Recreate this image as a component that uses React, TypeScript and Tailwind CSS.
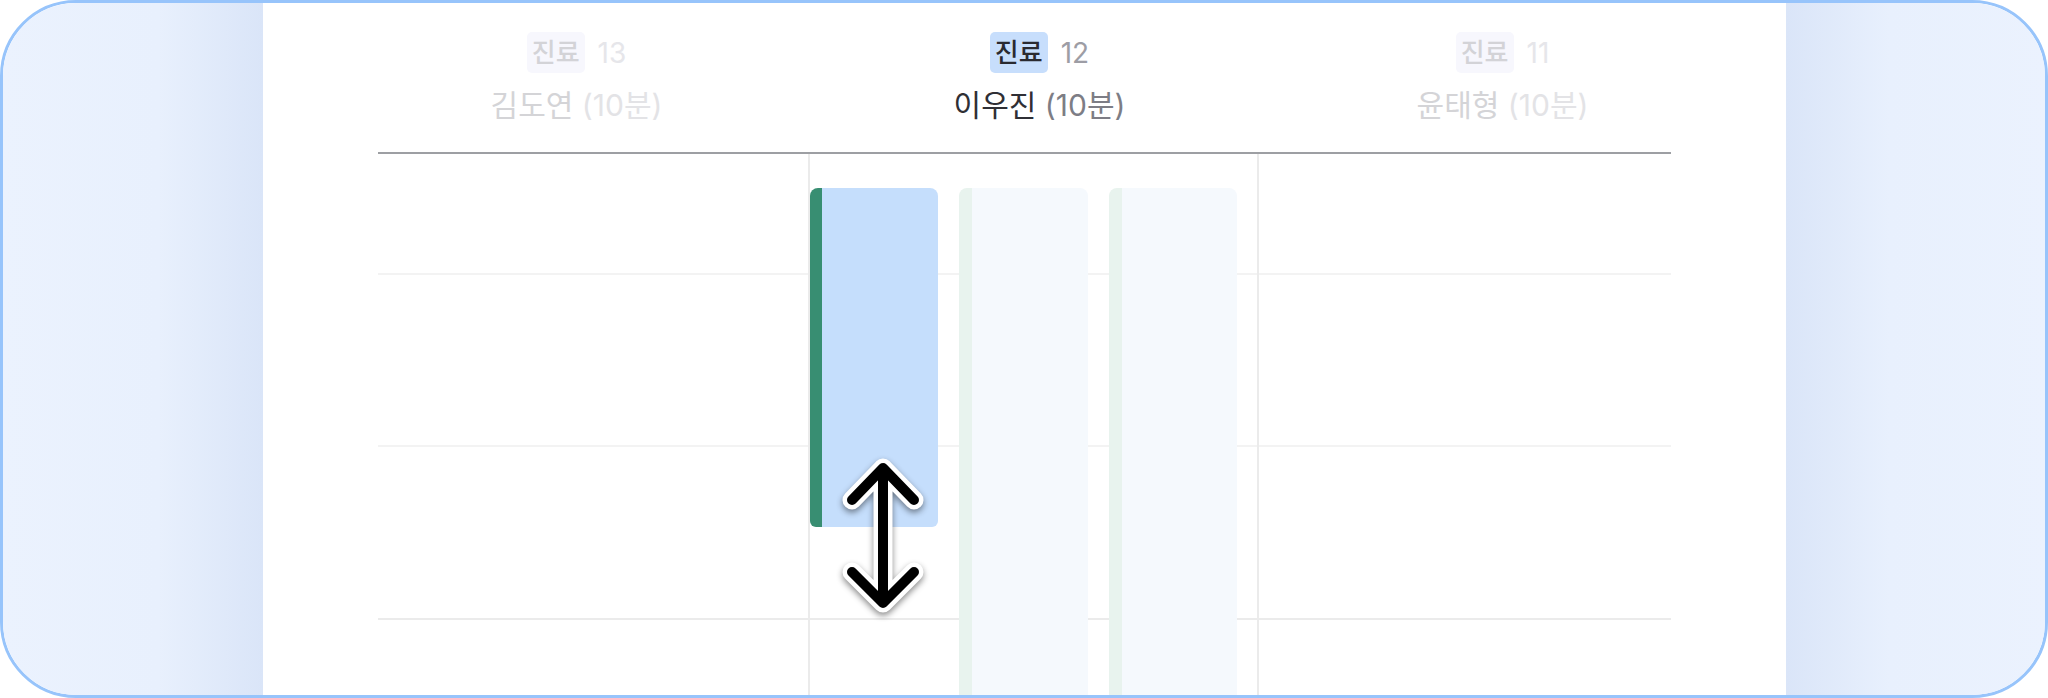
import React from "react"

const doctors = [
    { name: "김도연", count: 13, active: false },
    { name: "이우진", count: 12, active: true },
    { name: "윤태형", count: 11, active: false },
]

function ResizeCursor() {
    const d = "M50 18V153M19 50L50 18L81 50M19 122L50 153L81 122"
    return (
        <svg
            width="100"
            height="170"
            viewBox="0 0 100 170"
            className="drop-shadow-[0_3px_3px_rgba(0,0,0,0.45)]"
        >
            <g fill="none" strokeLinecap="round" strokeLinejoin="round">
                <path d={d} stroke="#ffffff" strokeWidth="19" />
                <path d={d} stroke="#000000" strokeWidth="10" />
            </g>
        </svg>
    )
}

export default function App() {
    return (
        <div className="w-[2048px] h-[698px] rounded-[76px] border-[3px] border-[#97c4fb] overflow-hidden flex font-['Inter','Noto_Sans_CJK_KR',sans-serif]">
            {/* Left backdrop */}
            <div className="w-[260px] shrink-0 bg-linear-to-r from-[#ebf2fe] via-[#e8f0fd] via-60% to-[#dae5f8]" />

            {/* Schedule panel */}
            <div className="w-[1523px] shrink-0 bg-white flex flex-col">
                {/* Header */}
                <div className="mx-[115px] h-[151px] shrink-0 border-b-2 border-[#9d9fa3]">
                    <div className="-ml-[33px] flex w-[1389px] pt-[29px]">
                        {doctors.map((doc) => (
                            <div key={doc.name} className="w-[463px] flex flex-col items-center">
                                <div className="flex items-center gap-[13px]">
                                    <span
                                        className={
                                            doc.active
                                                ? "h-[41px] px-[5px] rounded-[5px] flex items-center text-[26px] leading-none font-medium bg-[#c7defc] text-[#2a2a30]"
                                                : "h-[41px] px-[5px] rounded-[5px] flex items-center text-[26px] leading-none font-medium bg-[#f7f7fd] text-[#d3d3d7]"
                                        }
                                    >
                                        진료
                                    </span>
                                    <span
                                        className={
                                            doc.active
                                                ? "text-[28px] leading-none text-[#9d9da5]"
                                                : "text-[28px] leading-none text-[#e6e6ea]"
                                        }
                                    >
                                        {doc.count}
                                    </span>
                                </div>
                                <div className="mt-[12px] text-[30px] leading-[40px]">
                                    <span className={doc.active ? "text-[#2f2f35]" : "text-[#d4d4d7]"}>
                                        {doc.name}
                                    </span>{" "}
                                    <span className={doc.active ? "text-[#7d7d85]" : "text-[#e3e3e6]"}>
                                        (10분)
                                    </span>
                                </div>
                            </div>
                        ))}
                    </div>
                </div>

                {/* Body */}
                <div className="relative flex-1 mx-[115px] grid grid-cols-[430px_451px_412px]">
                    {/* Row lines */}
                    <div className="absolute inset-0 flex flex-col pointer-events-none">
                        <div className="h-[121px] shrink-0 border-b-2 border-[#f3f3f3]" />
                        <div className="h-[172px] shrink-0 border-b-2 border-[#f3f3f3]" />
                        <div className="h-[173px] shrink-0 border-b-2 border-[#ebebeb]" />
                    </div>

                    <div className="relative" />

                    <div className="relative border-x-2 border-[#ebebeb] flex gap-[21px] pr-[20px] pt-[34px]">
                        <div className="flex-1 self-start h-[339px] rounded-t-[8px] rounded-b-[6px] overflow-hidden flex">
                            <div className="w-[12px] bg-[#388e72]" />
                            <div className="flex-1 bg-[#c5defc]" />
                        </div>
                        <div className="flex-1 rounded-t-[8px] overflow-hidden flex">
                            <div className="w-[13px] bg-[#e8f3ee]" />
                            <div className="flex-1 bg-[#f5f9fd]" />
                        </div>
                        <div className="flex-1 rounded-t-[8px] overflow-hidden flex">
                            <div className="w-[13px] bg-[#e8f3ee]" />
                            <div className="flex-1 bg-[#f5f9fd]" />
                        </div>

                        <div className="absolute left-[23px] top-[296px]">
                            <ResizeCursor />
                        </div>
                    </div>

                    <div className="relative" />
                </div>
            </div>

            {/* Right backdrop */}
            <div className="flex-1 bg-linear-to-l from-[#ebf2fe] via-[#e8f0fd] via-60% to-[#dae5f8]" />
        </div>
    )
}
